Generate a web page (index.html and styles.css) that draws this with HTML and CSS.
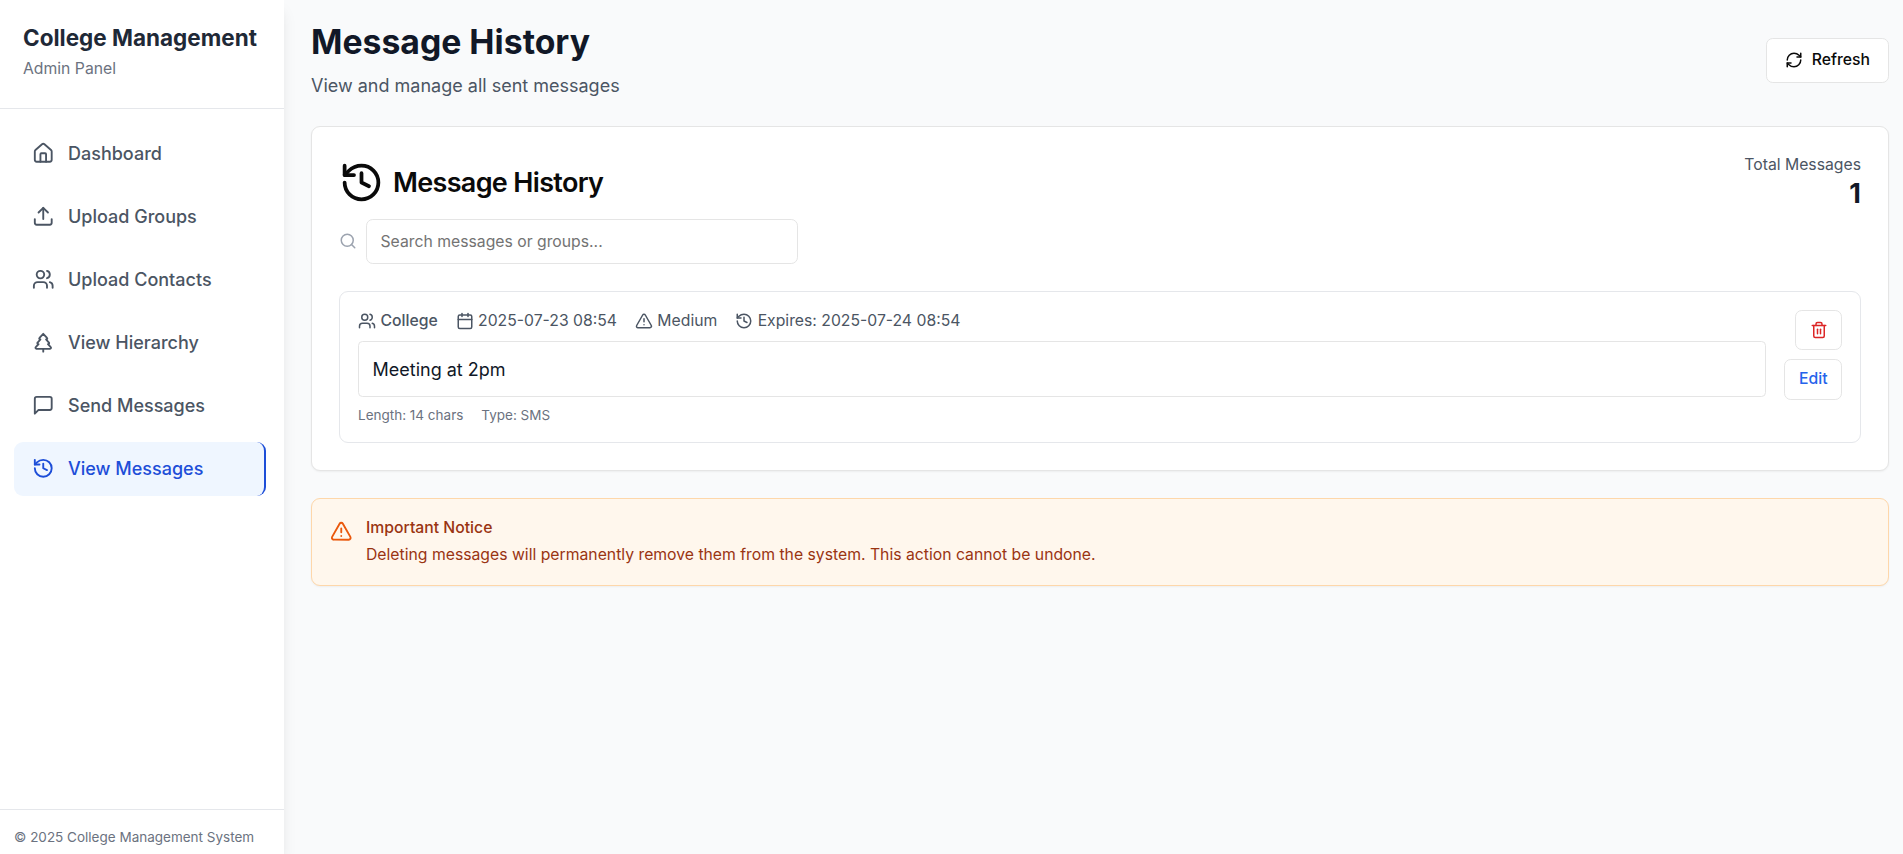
FILE: index.html
```
<!DOCTYPE html>
<html lang="en">
<head>
  <meta charset="UTF-8" />
  <meta name="viewport" content="width=device-width, initial-scale=1" />
  <title>Message History - College Management</title>
  <link rel="stylesheet" href="styles.css">
</head>
<body>
  <!-- shared icons -->
  <svg class="sprite">
    <symbol id="history" viewBox="0 0 24 24"><path d="M3 12a9 9 0 1 0 9-9 9.75 9.75 0 0 0-6.74 2.74L3 8"/><path d="M3 3v5h5"/><path d="M12 7v5l4 2"/></symbol>
    <symbol id="users" viewBox="0 0 24 24"><path d="M16 21v-2a4 4 0 0 0-4-4H6a4 4 0 0 0-4 4v2"/><circle cx="9" cy="7" r="4"/><path d="M22 21v-2a4 4 0 0 0-3-3.87"/><path d="M16 3.13a4 4 0 0 1 0 7.75"/></symbol>
    <symbol id="alert" viewBox="0 0 24 24"><path d="m21.73 18-8-14a2 2 0 0 0-3.48 0l-8 14A2 2 0 0 0 4 21h16a2 2 0 0 0 1.73-3"/><path d="M12 9v4"/><path d="M12 17h.01"/></symbol>
  </svg>
  <div class="layout">
    <aside class="sidebar">
      <div class="sidebar-header">
        <h2>College Management</h2>
        <p>Admin Panel</p>
      </div>
      <nav class="nav">
        <a class="nav-item">
          <svg class="icon icon-md" viewBox="0 0 24 24"><path d="M15 21v-8a1 1 0 0 0-1-1h-4a1 1 0 0 0-1 1v8"/><path d="M3 10a2 2 0 0 1 .709-1.528l7-5.999a2 2 0 0 1 2.582 0l7 5.999A2 2 0 0 1 21 10v9a2 2 0 0 1-2 2H5a2 2 0 0 1-2-2z"/></svg>
          <span>Dashboard</span>
        </a>
        <a class="nav-item">
          <svg class="icon icon-md" viewBox="0 0 24 24"><path d="M21 15v4a2 2 0 0 1-2 2H5a2 2 0 0 1-2-2v-4"/><path d="m17 8-5-5-5 5"/><path d="M12 3v12"/></svg>
          <span>Upload Groups</span>
        </a>
        <a class="nav-item">
          <svg class="icon icon-md"><use href="#users"/></svg>
          <span>Upload Contacts</span>
        </a>
        <a class="nav-item">
          <svg class="icon icon-md" viewBox="0 0 24 24"><path d="m17 14 3 3.3a1 1 0 0 1-.7 1.7H4.7a1 1 0 0 1-.7-1.7L7 14h-.3a1 1 0 0 1-.7-1.7L9 9h-.2A1 1 0 0 1 8 7.3L12 3l4 4.3a1 1 0 0 1-.8 1.7H15l3 3.3a1 1 0 0 1-.7 1.7H17Z"/><path d="M12 22v-3"/></svg>
          <span>View Hierarchy</span>
        </a>
        <a class="nav-item">
          <svg class="icon icon-md" viewBox="0 0 24 24"><path d="M21 15a2 2 0 0 1-2 2H7l-4 4V5a2 2 0 0 1 2-2h14a2 2 0 0 1 2 2z"/></svg>
          <span>Send Messages</span>
        </a>
        <a class="nav-item active">
          <svg class="icon icon-md"><use href="#history"/></svg>
          <span>View Messages</span>
        </a>
      </nav>
      <div class="sidebar-footer">© 2025 College Management System</div>
    </aside>

    <main class="main">
      <header class="page-header">
        <div>
          <h1>Message History</h1>
          <p>View and manage all sent messages</p>
        </div>
        <button class="btn btn-refresh">
          <svg class="icon icon-sm" viewBox="0 0 24 24"><path d="M3 12a9 9 0 0 1 9-9 9.75 9.75 0 0 1 6.74 2.74L21 8"/><path d="M21 3v5h-5"/><path d="M21 12a9 9 0 0 1-9 9 9.75 9.75 0 0 1-6.74-2.74L3 16"/><path d="M8 16H3v5"/></svg>
          Refresh
        </button>
      </header>

      <section class="card">
        <div class="card-top">
          <div class="card-title">
            <svg class="icon icon-lg"><use href="#history"/></svg>
            <h3>Message History</h3>
          </div>
          <div class="total">
            <p>Total Messages</p>
            <strong>1</strong>
          </div>
        </div>
        <div class="search">
          <svg class="icon icon-sm" viewBox="0 0 24 24"><circle cx="11" cy="11" r="8"/><path d="m21 21-4.3-4.3"/></svg>
          <input type="text" placeholder="Search messages or groups..." />
        </div>

        <div class="message">
          <div class="message-body">
            <div class="meta">
              <span class="meta-item group"><svg class="icon icon-sm"><use href="#users"/></svg>College</span>
              <span class="meta-item"><svg class="icon icon-sm" viewBox="0 0 24 24"><path d="M8 2v4"/><path d="M16 2v4"/><rect width="18" height="18" x="3" y="4" rx="2"/><path d="M3 10h18"/></svg>2025-07-23 08:54</span>
              <span class="meta-item"><svg class="icon icon-sm"><use href="#alert"/></svg>Medium</span>
              <span class="meta-item"><svg class="icon icon-sm"><use href="#history"/></svg>Expires: 2025-07-24 08:54</span>
            </div>
            <div class="message-text">Meeting at 2pm</div>
            <div class="details">
              <span>Length: 14 chars</span>
              <span>Type: SMS</span>
            </div>
          </div>
          <div class="actions">
            <button class="btn btn-sm btn-delete" aria-label="Delete">
              <svg class="icon icon-sm" viewBox="0 0 24 24"><path d="M3 6h18"/><path d="M19 6v14c0 1-1 2-2 2H7c-1 0-2-1-2-2V6"/><path d="M8 6V4c0-1 1-2 2-2h4c1 0 2 1 2 2v2"/><path d="M10 11v6"/><path d="M14 11v6"/></svg>
            </button>
            <button class="btn btn-sm btn-edit">Edit</button>
          </div>
        </div>
      </section>

      <section class="notice">
        <svg class="icon icon-md"><use href="#alert"/></svg>
        <div>
          <h4>Important Notice</h4>
          <p>Deleting messages will permanently remove them from the system. This action cannot be undone.</p>
        </div>
      </section>
    </main>
  </div>
</body>
</html>
```

FILE: styles.css
```
html {
  font-size: 18px;
}
* {
  box-sizing: border-box;
}
body {
  margin: 0;
  font-family: Inter, sans-serif;
  line-height: 1.5;
  color: #0a0a0a;
  background: #f9fafb;
}
h1, h2, h3, h4, p {
  margin: 0;
}
.sprite {
  display: none;
}
.icon {
  flex-shrink: 0;
  fill: none;
  stroke: currentColor;
  stroke-width: 2;
  stroke-linecap: round;
  stroke-linejoin: round;
}
.icon-sm {
  width: 1rem;
  height: 1rem;
}
.icon-md {
  width: 1.25rem;
  height: 1.25rem;
}
.icon-lg {
  width: 2.5rem;
  height: 2.5rem;
}
.layout {
  display: flex;
  height: 100vh;
  overflow: hidden;
}

/* Sidebar */
.sidebar {
  display: flex;
  flex-direction: column;
  width: 284px;
  flex-shrink: 0;
  background: #fff;
  box-shadow: 0 10px 15px -3px rgba(0,0,0,0.1), 0 4px 6px -4px rgba(0,0,0,0.1);
}
.sidebar-header {
  padding: 21.6px 1.25rem 27.9px 23px;
  border-bottom: 1px solid #e5e7eb;
}
.sidebar-header h2 {
  font-size: 1.25rem;
  line-height: 1.75rem;
  font-weight: 700;
  color: #1f2937;
  white-space: nowrap;
}
.sidebar-header p {
  margin-top: 0.25rem;
  font-size: 0.875rem;
  line-height: 1.25rem;
  color: #6b7280;
}
.nav {
  flex: 1;
  display: flex;
  flex-direction: column;
  gap: 0.5rem;
  padding: 1rem 18px 1rem 14px;
}
.nav-item {
  display: flex;
  align-items: center;
  gap: 0.75rem;
  padding: 12.6px 1rem 14.4px;
  border-radius: 0.5rem;
  font-weight: 500;
  color: #4b5563;
}
.nav-item.active {
  background: #eff6ff;
  color: #1d4ed8;
  border-right: 2px solid #1d4ed8;
}
.sidebar-footer {
  padding: 1rem 14px 8px;
  border-top: 1px solid #e5e7eb;
  font-size: 0.75rem;
  line-height: 1rem;
  color: #6b7280;
}

/* Page */
.main {
  flex: 1;
  display: flex;
  flex-direction: column;
  gap: 1.5rem;
  padding: 22px 14px 22px 1.5rem;
}
.page-header {
  display: flex;
  justify-content: space-between;
  align-items: center;
}
.page-header h1 {
  font-size: 1.875rem;
  line-height: 2.25rem;
  font-weight: 700;
  color: #111827;
}
.page-header p {
  margin-top: 0.5rem;
  color: #4b5563;
}
.btn {
  display: inline-flex;
  align-items: center;
  justify-content: center;
  gap: 0.5rem;
  border: 1px solid #e5e5e5;
  border-radius: 0.375rem;
  background: #fff;
  color: #0a0a0a;
  font-family: inherit;
  font-size: 0.875rem;
  line-height: 1.25rem;
  font-weight: 500;
}
.btn-refresh {
  height: 2.5rem;
  padding: 0 1rem;
}
.btn-sm {
  height: 2.25rem;
  padding: 0 0.75rem;
}
.btn-delete {
  color: #dc2626;
}
.btn-edit {
  color: #2563eb;
}
.card {
  padding: 1.5rem;
  border: 1px solid #e5e5e5;
  border-radius: 0.5rem;
  background: #fff;
  box-shadow: 0 1px 2px rgba(0,0,0,0.05);
}
.card-top {
  display: flex;
  justify-content: space-between;
  align-items: center;
}
.card-title {
  display: flex;
  align-items: center;
  gap: 0.5rem;
}
.card-title h3 {
  font-size: 1.5rem;
  line-height: 1;
  font-weight: 600;
  letter-spacing: -0.025em;
}
.total {
  text-align: right;
}
.total p {
  font-size: 0.875rem;
  line-height: 1.25rem;
  color: #4b5563;
}
.total strong {
  display: block;
  font-size: 1.5rem;
  line-height: 2rem;
  color: #111827;
}
.search {
  display: flex;
  align-items: center;
  gap: 0.5rem;
  margin: 0.375rem 0 1.5rem;
  color: #9ca3af;
}
.search input {
  width: 24rem;
  height: 2.5rem;
  padding: 0.5rem 0.75rem;
  border: 1px solid #e5e5e5;
  border-radius: 0.375rem;
  background: #fff;
  font-family: inherit;
  font-size: 0.875rem;
}
.search input::placeholder {
  color: #737373;
}

/* Message row */
.message {
  display: flex;
  gap: 1rem;
  padding: 1rem;
  border: 1px solid #e5e7eb;
  border-radius: 0.5rem;
}
.message-body {
  flex: 1;
}
.meta {
  display: flex;
  gap: 0.99rem;
  font-size: 0.875rem;
  line-height: 1.25rem;
  color: #4b5563;
}
.meta-item {
  display: flex;
  align-items: center;
  gap: 0.25rem;
}
.meta-item.group {
  font-weight: 500;
}
.message-text {
  margin: 0.5rem 0;
  padding: 0.75rem;
  border: 1px solid #e5e5e5;
  border-radius: 0.25rem;
  color: #111827;
}
.details {
  display: flex;
  gap: 1rem;
  font-size: 0.75rem;
  line-height: 1rem;
  color: #6b7280;
}
.actions {
  display: flex;
  flex-direction: column;
  align-items: flex-end;
  gap: 0.5rem;
}
.notice {
  display: flex;
  align-items: flex-start;
  gap: 0.75rem;
  padding: 1rem;
  border: 1px solid #fed7aa;
  border-radius: 0.5rem;
  background: #fff7ed;
  color: #9a3412;
  font-size: 0.875rem;
  line-height: 1.25rem;
  box-shadow: 0 1px 2px rgba(0,0,0,0.05);
}
.notice .icon {
  margin-top: 0.125rem;
  color: #ea580c;
}
.notice h4 {
  font-size: inherit;
  font-weight: 500;
}
.notice p {
  margin-top: 0.25rem;
}
```
